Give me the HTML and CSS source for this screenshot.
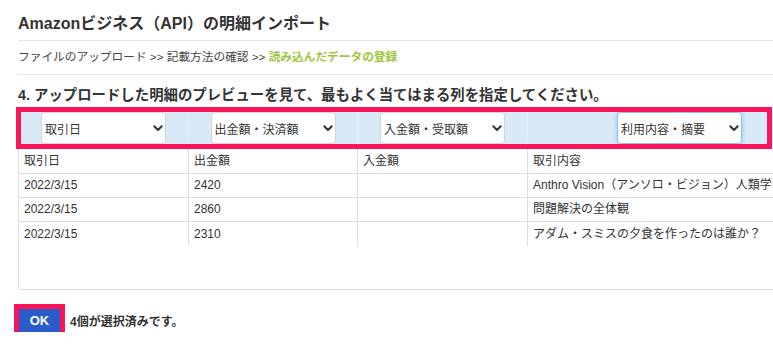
FILE: index.html
```html
<!DOCTYPE html>
<html lang="ja">
<head>
<meta charset="utf-8">
<title>Amazonビジネス（API）の明細インポート</title>
<link rel="stylesheet" href="styles.css">
</head>
<body>
<div class="page">
  <h1 class="title">Amazonビジネス（API）の明細インポート</h1>
  <div class="crumbs">ファイルのアップロード &gt;&gt; 記載方法の確認 &gt;&gt; <span class="crumb-active">読み込んだデータの登録</span></div>
  <h2 class="step">4. アップロードした明細のプレビューを見て、最もよく当てはまる列を指定してください。</h2>

  <div class="preview-wrap">
    <div class="preview">
      <div class="grid map-row">
        <div class="cell map-cell">
          <div class="sel"><span>取引日</span><svg class="chev" viewBox="0 0 10 7" width="10" height="7"><path d="M1.3 1.3 L5 5 L8.7 1.3"/></svg></div>
        </div>
        <div class="cell map-cell">
          <div class="sel"><span>出金額・決済額</span><svg class="chev" viewBox="0 0 10 7" width="10" height="7"><path d="M1.3 1.3 L5 5 L8.7 1.3"/></svg></div>
        </div>
        <div class="cell map-cell">
          <div class="sel"><span>入金額・受取額</span><svg class="chev" viewBox="0 0 10 7" width="10" height="7"><path d="M1.3 1.3 L5 5 L8.7 1.3"/></svg></div>
        </div>
        <div class="cell map-cell">
          <div class="sel sel-focus"><span>利用内容・摘要</span><svg class="chev" viewBox="0 0 10 7" width="10" height="7"><path d="M1.3 1.3 L5 5 L8.7 1.3"/></svg></div>
        </div>
      </div>
      <div class="grid head-row">
        <div class="cell">取引日</div>
        <div class="cell">出金額</div>
        <div class="cell">入金額</div>
        <div class="cell">取引内容</div>
      </div>
      <div class="grid row">
        <div class="cell">2022/3/15</div>
        <div class="cell">2420</div>
        <div class="cell"></div>
        <div class="cell">Anthro Vision（アンソロ・ビジョン）人類学</div>
      </div>
      <div class="grid row">
        <div class="cell">2022/3/15</div>
        <div class="cell">2860</div>
        <div class="cell"></div>
        <div class="cell">問題解決の全体観</div>
      </div>
      <div class="grid row row-last">
        <div class="cell">2022/3/15</div>
        <div class="cell">2310</div>
        <div class="cell"></div>
        <div class="cell">アダム・スミスの夕食を作ったのは誰か？</div>
      </div>
    </div>
    <div class="highlight"></div>
  </div>

  <div class="actions">
    <button class="ok" type="button">OK</button>
    <span class="count">4個が選択済みです。</span>
  </div>
</div>
</body>
</html>
```

FILE: styles.css
```css
html, body {
  margin: 0;
  padding: 0;
  background: #fff;
  overflow: hidden;
}

body {
  font-family: "Liberation Sans", "Noto Sans CJK JP", sans-serif;
  color: #333;
}

.page {
  padding-left: 18px;
  width: 755px;
}

.title {
  margin: 0;
  font-size: 16px;
  font-weight: bold;
  line-height: 24px;
  padding: 12px 0 4px;
  border-bottom: 1px solid #e6e6e6;
  color: #333;
}

.crumbs {
  font-size: 11.7px;
  line-height: 18px;
  padding: 7px 0 8px;
  border-bottom: 1px solid #e6e6e6;
  color: #444;
  white-space: nowrap;
}

.crumb-active {
  color: #a2c43c;
  font-weight: bold;
}

.step {
  margin: 10px 0 2px;
  font-size: 14.4px;
  font-weight: bold;
  line-height: 20px;
  color: #333;
  white-space: nowrap;
}

.preview-wrap {
  position: relative;
}

.preview {
  box-sizing: border-box;
  height: 183px;
  width: 755px;
  overflow: hidden;
  border-left: 1px solid #dedede;
  border-bottom: 1px solid #dedede;
  border-radius: 0 0 0 4px;
}

.grid {
  display: grid;
  grid-template-columns: 170px 169px 170px 304px;
  width: 813px;
}

.cell {
  box-sizing: border-box;
  border-right: 1px solid #dedede;
  padding-left: 5px;
  font-size: 12px;
  white-space: nowrap;
  overflow: hidden;
}

.map-row {
  padding: 5px 0;
}

.map-cell {
  background: #d8eaf6;
  height: 32px;
  padding: 0;
  display: flex;
  justify-content: center;
  align-items: stretch;
  border-right-color: #e4edf3;
}

.sel {
  box-sizing: border-box;
  width: 125px;
  height: 32px;
  background: #fff;
  border: 1px solid #d4d4d4;
  border-radius: 4px;
  display: flex;
  align-items: center;
  justify-content: space-between;
  padding: 0 2px 0 3px;
  font-size: 12px;
  color: #333;
}

.sel-focus {
  border-color: #8cc0ee;
  box-shadow: 0 0 4px 1px #a9d0f3;
}

.chev {
  display: block;
}

.chev path {
  fill: none;
  stroke: #333;
  stroke-width: 2;
  stroke-linecap: round;
  stroke-linejoin: round;
}

.head-row .cell {
  line-height: 24px;
  border-bottom: 1px solid #dedede;
}

.row .cell {
  line-height: 23px;
  border-bottom: 1px solid #dedede;
}

.row-last .cell {
  line-height: 24px;
  border-bottom: none;
}

.highlight {
  position: absolute;
  top: 0;
  left: -2px;
  width: 756px;
  height: 42px;
  box-sizing: border-box;
  border: 5px solid #f8155a;
  pointer-events: none;
}

.actions {
  display: flex;
  align-items: center;
  margin-top: 19px;
  padding-left: 1px;
}

.ok {
  width: 41px;
  height: 23px;
  border: none;
  padding: 0;
  background: #2a5bcb;
  color: #fff;
  font-family: "Liberation Sans", sans-serif;
  font-size: 13px;
  font-weight: bold;
  outline: 5px solid #f8155a;
}

.count {
  margin-left: 10px;
  font-size: 12px;
  font-weight: bold;
  color: #333;
}
```
